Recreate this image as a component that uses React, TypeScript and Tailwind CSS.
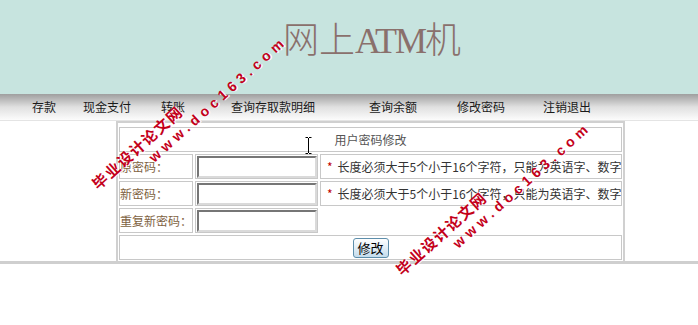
const navItems = [
  { label: "存款", cls: "ml-[32px]" },
  { label: "现金支付", cls: "ml-[27px]" },
  { label: "转账", cls: "ml-[30px]" },
  { label: "查询存取款明细", cls: "ml-[46px]" },
  { label: "查询余额", cls: "ml-[54px]" },
  { label: "修改密码", cls: "ml-[40px]" },
  { label: "注销退出", cls: "ml-[38px]" },
];

const NOTE = "长度必须大于5个小于16个字符，只能为英语字、数字";

function PwdInput() {
  return (
    <input
      type="password"
      className="w-[120px] h-[22px] border-2 border-t-[#767676] border-l-[#767676] border-r-[#dadada] border-b-[#dadada] bg-white outline-none"
    />
  );
}

function FormRow({ label, note }: { label: string; note?: string }) {
  return (
    <>
      <div className="h-[25px] border border-[#c8c8c8] flex items-center text-[#80623f]">
        {label}
      </div>
      <div className="h-[25px] border border-[#c8c8c8] flex items-center px-px">
        <PwdInput />
      </div>
      {note ? (
        <div className="h-[25px] border border-[#c8c8c8] flex items-center pl-[6px] overflow-hidden whitespace-nowrap text-[#333]">
          <span className="text-[#c00000] mr-[5px]">*</span>
          {note}
        </div>
      ) : (
        <div />
      )}
    </>
  );
}

function Watermark({ pos }: { pos: string }) {
  return (
    <div
      className={
        "absolute origin-top-left rotate-[-42deg] pointer-events-none font-bold text-[#c4001a] font-['Liberation_Sans','Noto_Sans_CJK_SC',sans-serif] [text-shadow:1px_1px_0_#ffffff] " +
        pos
      }
    >
      <div className="text-[15px] leading-[18px] tracking-[1.5px] whitespace-nowrap">毕业设计论文网</div>
      <div className="ml-[60px] text-[14px] leading-[16px] tracking-[4.5px] whitespace-nowrap">www.doc163.com</div>
    </div>
  );
}

export default function App() {
  return (
    <div className="relative w-[698px] h-[325px] overflow-hidden bg-white text-[12px] text-black font-['Noto_Sans_CJK_SC',sans-serif]">
      {/* 标题 */}
      <header className="h-[94px] bg-[#c7e4df] pt-[19px] pl-[283px]">
        <h1 className="text-[36px] leading-none font-light text-[#8a706c] whitespace-nowrap">
          网上
          <span className="font-['Liberation_Serif',serif] tracking-[-2px]">ATM</span>
          机
        </h1>
      </header>

      {/* 菜单 */}
      <nav className="h-[26px] flex items-center bg-gradient-to-b from-[#9f9f9f] via-[#e0e0e0] to-[#fcfcfc]">
        {navItems.map((n) => (
          <a key={n.label} className={n.cls + " text-[#1a1a1a] whitespace-nowrap cursor-pointer"}>
            {n.label}
          </a>
        ))}
      </nav>
      <div className="h-px bg-[#e4e4e4]" />

      {/* 修改密码表单 */}
      <div className="border-b-[3px] border-[#cfcfcf]">
        <div className="ml-[116px] w-[509px] border-x-2 border-t-2 border-[#d0d0d0] px-px pt-[4px] pb-px">
          <div className="grid grid-cols-[74px_123px_302px] gap-[2px]">
            <div className="col-span-3 h-[25px] border border-[#c8c8c8] flex items-center justify-center text-[#555]">
              用户密码修改
            </div>
            <FormRow label="原密码：" note={NOTE} />
            <FormRow label="新密码：" note={NOTE} />
            <FormRow label="重复新密码：" />
            <div className="col-span-3 h-[25px] border border-[#c8c8c8] flex items-center justify-center">
              <button className="w-[36px] h-[20px] rounded-[3px] border border-[#5d8eab] bg-gradient-to-b from-white to-[#c4dcec] text-[13px] leading-none text-black">
                修改
              </button>
            </div>
          </div>
        </div>
      </div>

      {/* 鼠标光标 */}
      <svg className="absolute left-[305px] top-[137px]" width="7" height="17" viewBox="0 0 7 17">
        <path d="M0.5 0.5h2.5M4 0.5h2.5M3.5 1v15M0.5 16.5h2.5M4 16.5h2.5" stroke="#000" strokeWidth="1" fill="none" />
      </svg>

      <Watermark pos="left-[89px] top-[180px]" />
      <Watermark pos="left-[393px] top-[266px]" />
    </div>
  );
}
